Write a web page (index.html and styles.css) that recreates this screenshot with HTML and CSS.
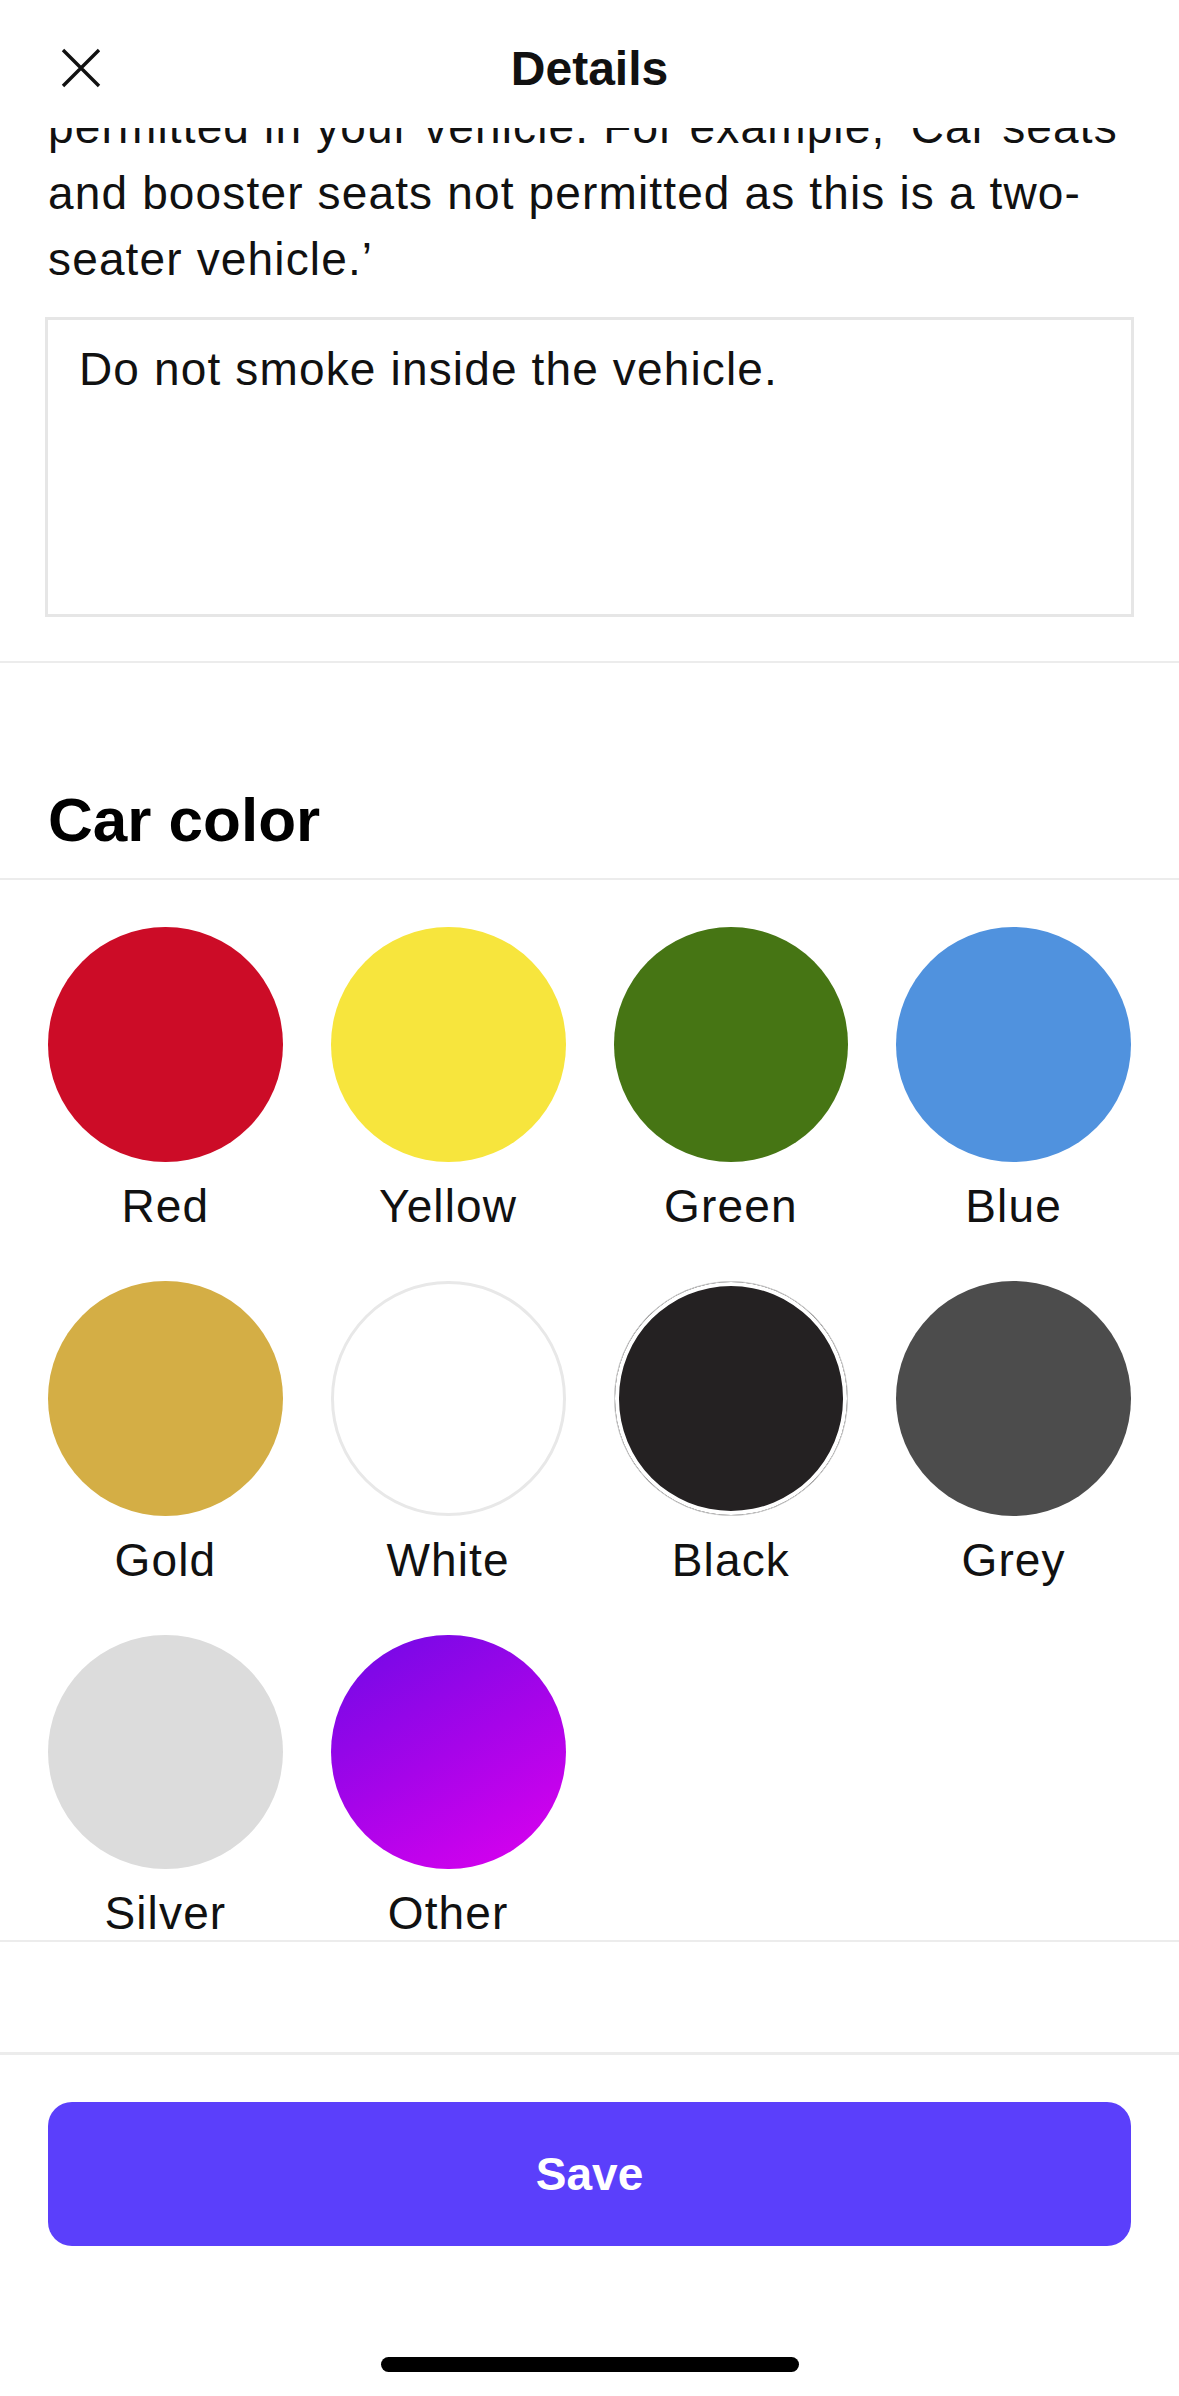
FILE: index.html
```html
<!DOCTYPE html>
<html lang="en">

<head>
    <meta charset="UTF-8">
    <meta name="viewport" content="width=device-width, initial-scale=1.0">

    <link rel="stylesheet" href="styles.css">

    <title>Details</title>
</head>

<body>
    <div class="screen">
        <header class="topbar">
            <button class="close" type="button" aria-label="Close">
                <svg width="40" height="40" viewBox="0 0 40 40">
                    <path d="M2 2 L38 38 M38 2 L2 38" stroke="#111" stroke-width="3.4" fill="none" />
                </svg>
            </button>
            <h1 class="title">Details</h1>
            <span></span>
        </header>

        <main class="scroll">
            <section class="rules">
                <p class="hint">permitted in your vehicle. For example, ‘Car seats and booster seats not permitted as this is a two-seater vehicle.’</p>
                <textarea class="rules_input">Do not smoke inside the vehicle.</textarea>
            </section>

            <section class="color_head">
                <h2>Car color</h2>
            </section>

            <section class="colors">
                <div class="swatch"><span class="dot red"></span><span class="swatch_name">Red</span></div>
                <div class="swatch"><span class="dot yellow"></span><span class="swatch_name">Yellow</span></div>
                <div class="swatch"><span class="dot green"></span><span class="swatch_name">Green</span></div>
                <div class="swatch"><span class="dot blue"></span><span class="swatch_name">Blue</span></div>
                <div class="swatch"><span class="dot gold"></span><span class="swatch_name">Gold</span></div>
                <div class="swatch"><span class="dot white"></span><span class="swatch_name">White</span></div>
                <div class="swatch"><span class="dot black"></span><span class="swatch_name">Black</span></div>
                <div class="swatch"><span class="dot grey"></span><span class="swatch_name">Grey</span></div>
                <div class="swatch"><span class="dot silver"></span><span class="swatch_name">Silver</span></div>
                <div class="swatch"><span class="dot other"></span><span class="swatch_name">Other</span></div>
            </section>
        </main>

        <footer class="bottom">
            <button class="save" type="button">Save</button>
            <div class="home_bar"></div>
        </footer>
    </div>
</body>

</html>
```
FILE: styles.css
```css
body {
    margin: 0;
    background-color: #fff;
    font-family: 'Liberation Sans', Arial, sans-serif;
    color: #111;
}

.screen {
    height: 2396px;
    display: flex;
    flex-direction: column;
    overflow: hidden;
}

.topbar {
    height: 128px;
    flex-shrink: 0;
    box-sizing: border-box;
    padding: 8px 48px 0;
    display: grid;
    grid-template-columns: 1fr auto 1fr;
    align-items: center;
    background-color: #fff;
}

.close {
    width: 40px;
    height: 40px;
    margin-left: 13px;
    padding: 0;
    border: 0;
    background: none;
}

.close svg {
    display: block;
}

.title {
    margin: 0;
    font-size: 48px;
    font-weight: bold;
    color: #111;
}

.scroll {
    flex: 1;
    overflow: hidden;
}

.rules {
    padding: 0 48px 44px;
    border-bottom: 2px solid #ececec;
}

.hint {
    margin: -34px 0 25px;
    font-size: 46px;
    line-height: 66px;
    letter-spacing: 0.025em;
}

.rules_input {
    display: block;
    width: calc(100% + 6px);
    height: 300px;
    box-sizing: border-box;
    margin: 0 -3px;
    padding: 16px 31px;
    border: 3px solid #e6e6e6;
    border-radius: 0;
    resize: none;
    outline: none;
    font-family: 'Liberation Sans', Arial, sans-serif;
    font-size: 46px;
    line-height: 66px;
    letter-spacing: 0.025em;
    color: #111;
    background-color: #fff;
}

.color_head {
    padding: 117px 48px 18px;
    border-bottom: 2px solid #ececec;
}

.color_head h2 {
    margin: 0;
    font-size: 62px;
    line-height: 80px;
    font-weight: bold;
    color: #000;
}

.colors {
    padding: 47px 48px 0;
    display: grid;
    grid-template-columns: repeat(4, 1fr);
    column-gap: 48px;
    row-gap: 48px;
    border-bottom: 2px solid #ececec;
}

.swatch {
    display: flex;
    flex-direction: column;
    align-items: center;
}

.dot {
    display: block;
    width: 100%;
    aspect-ratio: 1;
    box-sizing: border-box;
    border-radius: 50%;
}

.swatch_name {
    margin-top: 17px;
    font-size: 46px;
    line-height: 54px;
    letter-spacing: 0.025em;
    color: #111;
}

.red { background-color: #cc0c27; }
.yellow { background-color: #f7e53d; }
.green { background-color: #467514; }
.blue { background-color: #5092de; }
.gold { background-color: #d4ae45; }
.grey { background-color: #4c4c4c; }
.silver { background-color: #dcdcdc; }

.white {
    background-color: #fff;
    border: 3px solid #e8e8e8;
}

.black {
    background-color: #242122;
    border: 1px solid #d4d4d4;
    box-shadow: inset 0 0 0 4px #fff;
}

.other {
    background: linear-gradient(150deg, #6e0ae6 0%, #a604e9 50%, #de00ef 100%);
}

.bottom {
    height: 344px;
    flex-shrink: 0;
    box-sizing: border-box;
    padding: 47px 48px 24px;
    border-top: 3px solid #ececec;
    display: flex;
    flex-direction: column;
    justify-content: space-between;
    align-items: center;
}

.save {
    width: 100%;
    height: 144px;
    border: 0;
    border-radius: 24px;
    background-color: #5b3ffb;
    color: #fff;
    font-family: 'Liberation Sans', Arial, sans-serif;
    font-size: 46px;
    font-weight: bold;
}

.home_bar {
    width: 418px;
    height: 15px;
    border-radius: 8px;
    background-color: #000;
}
```
